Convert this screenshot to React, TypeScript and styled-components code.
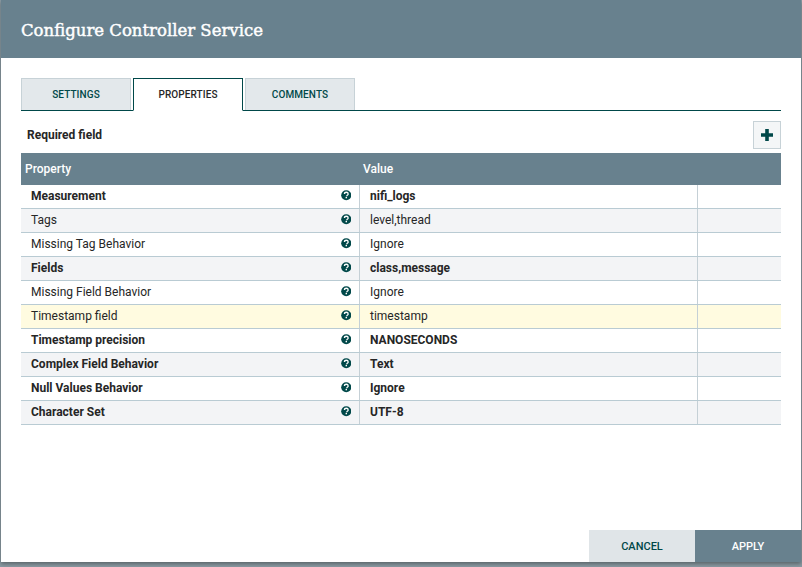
import React from "react";
import styled, { createGlobalStyle } from "styled-components";

const Global = createGlobalStyle`
  html, body { margin: 0; padding: 0; width: 802px; height: 567px; overflow: hidden; background: #7d8f98; }
  * { box-sizing: border-box; }
`;

const Backdrop = styled.div`
  width: 802px;
  height: 567px;
  padding: 0 1px 5px 1px;
  background: #8a9aa2;
`;

const Dialog = styled.div`
  width: 800px;
  height: 562px;
  background: #fff;
  display: flex;
  flex-direction: column;
  box-shadow: 0 2px 4px rgba(0, 0, 0, 0.35);
  font-family: Roboto, sans-serif;
`;

const Header = styled.header`
  height: 58px;
  flex: none;
  background: #68818e;
  color: #fff;
  display: flex;
  align-items: center;
  padding: 3px 0 0 20px;
  font-family: "DejaVu Serif", serif;
  font-size: 16.5px;
  font-weight: 400;
  -webkit-text-stroke: 0.45px #fff;
`;

const Body = styled.div`
  flex: 1;
  padding: 20px 20px 0;
  display: flex;
  flex-direction: column;
`;

const Tabs = styled.div`
  display: flex;
  gap: 2px;
  height: 33px;
  flex: none;
  border-bottom: 1px solid #004849;
`;

const Tab = styled.div<{ $active?: boolean }>`
  width: 110px;
  height: ${(p) => (p.$active ? "33px" : "32px")};
  display: flex;
  align-items: center;
  justify-content: center;
  font-size: 10px;
  font-weight: 500;
  letter-spacing: 0.1px;
  color: ${(p) => (p.$active ? "#262626" : "#004849")};
  background: ${(p) => (p.$active ? "#fff" : "#e3e8eb")};
  border: 1px solid ${(p) => (p.$active ? "#004849" : "#c7d2d7")};
  border-bottom: ${(p) => (p.$active ? "1px solid #fff" : "none")};
`;

const Toolbar = styled.div`
  height: 42px;
  flex: none;
  display: flex;
  align-items: center;
  justify-content: space-between;
  padding: 10px 0 4px 6px;
`;

const Required = styled.span`
  font-size: 12px;
  font-weight: 700;
  color: #262626;
`;

const AddButton = styled.div`
  width: 28px;
  height: 28px;
  background: #f4f6f7;
  border: 1px solid #c7d2d7;
  display: flex;
  align-items: center;
  justify-content: center;
`;

const Grid = styled.div`
  display: flex;
  flex-direction: column;
`;

const HeadRow = styled.div`
  height: 32px;
  background: #68818e;
  color: #fff;
  display: grid;
  grid-template-columns: 338px 1fr;
  align-items: center;
  font-size: 12px;
  font-weight: 500;
`;

const HeadCell = styled.div`
  padding-left: 4px;
`;

const Row = styled.div<{ $bg: string }>`
  height: 24px;
  display: grid;
  grid-template-columns: 339px 338px 1fr;
  background: ${(p) => p.$bg};
  border-bottom: 1px solid #b9cbd3;
  font-size: 12px;
  color: #262626;
`;

const Cell = styled.div<{ $bold?: boolean }>`
  display: flex;
  align-items: center;
  font-weight: ${(p) => (p.$bold ? 700 : 400)};
  padding-left: 10px;
  padding-bottom: 1px;
  border-right: 1px solid #c5d0d6;
`;

const PropCell = styled(Cell)`
  justify-content: space-between;
  padding-right: 8px;
`;

const EmptyCell = styled.div``;

const HelpIcon = styled.svg`
  width: 10.5px;
  height: 10.5px;
  flex: none;
  margin-bottom: 1px;
`;

const Footer = styled.div`
  height: 32px;
  flex: none;
  display: flex;
  justify-content: flex-end;
`;

const FooterButton = styled.div<{ $primary?: boolean }>`
  width: 106px;
  height: 32px;
  display: flex;
  align-items: center;
  justify-content: center;
  font-size: 11px;
  font-weight: 500;
  color: ${(p) => (p.$primary ? "#fff" : "#004849")};
  background: ${(p) => (p.$primary ? "#68818e" : "#e0e5e8")};
`;

const Help = () => (
  <HelpIcon viewBox="0 0 11 11">
    <circle cx="5.5" cy="5.5" r="5.3" fill="#004849" />
    <path d="M3.6 4.3c0-1.2.8-1.9 2-1.9 1.1 0 1.9.7 1.9 1.7 0 .7-.4 1.1-.9 1.4-.5.3-.6.5-.6 1" fill="none" stroke="#fff" strokeWidth="1.4" />
    <rect x="4.8" y="7.2" width="1.5" height="1.5" fill="#fff" />
  </HelpIcon>
);

const Plus = () => (
  <svg width="14" height="14" viewBox="0 0 14 14">
    <path d="M5.2 1h3.6v4.2H13v3.6H8.8V13H5.2V8.8H1V5.2h4.2z" fill="#004849" />
  </svg>
);

const rows: { name: string; value: string; bold?: boolean; bg: string }[] = [
  { name: "Measurement", value: "nifi_logs", bold: true, bg: "#ffffff" },
  { name: "Tags", value: "level,thread", bg: "#f3f4f6" },
  { name: "Missing Tag Behavior", value: "Ignore", bg: "#ffffff" },
  { name: "Fields", value: "class,message", bold: true, bg: "#f3f4f6" },
  { name: "Missing Field Behavior", value: "Ignore", bg: "#ffffff" },
  { name: "Timestamp field", value: "timestamp", bg: "#fffbe0" },
  { name: "Timestamp precision", value: "NANOSECONDS", bold: true, bg: "#ffffff" },
  { name: "Complex Field Behavior", value: "Text", bold: true, bg: "#f3f4f6" },
  { name: "Null Values Behavior", value: "Ignore", bold: true, bg: "#ffffff" },
  { name: "Character Set", value: "UTF-8", bold: true, bg: "#f3f4f6" },
];

export default function App() {
  return (
    <Backdrop>
      <Global />
      <Dialog>
        <Header>Configure Controller Service</Header>
        <Body>
          <Tabs>
            <Tab>SETTINGS</Tab>
            <Tab $active>PROPERTIES</Tab>
            <Tab>COMMENTS</Tab>
          </Tabs>
          <Toolbar>
            <Required>Required field</Required>
            <AddButton><Plus /></AddButton>
          </Toolbar>
          <Grid>
            <HeadRow>
              <HeadCell>Property</HeadCell>
              <HeadCell>Value</HeadCell>
            </HeadRow>
            {rows.map((r) => (
              <Row key={r.name} $bg={r.bg}>
                <PropCell $bold={r.bold}>{r.name}<Help /></PropCell>
                <Cell $bold={r.bold}>{r.value}</Cell>
                <EmptyCell />
              </Row>
            ))}
          </Grid>
        </Body>
        <Footer>
          <FooterButton>CANCEL</FooterButton>
          <FooterButton $primary>APPLY</FooterButton>
        </Footer>
      </Dialog>
    </Backdrop>
  );
}
